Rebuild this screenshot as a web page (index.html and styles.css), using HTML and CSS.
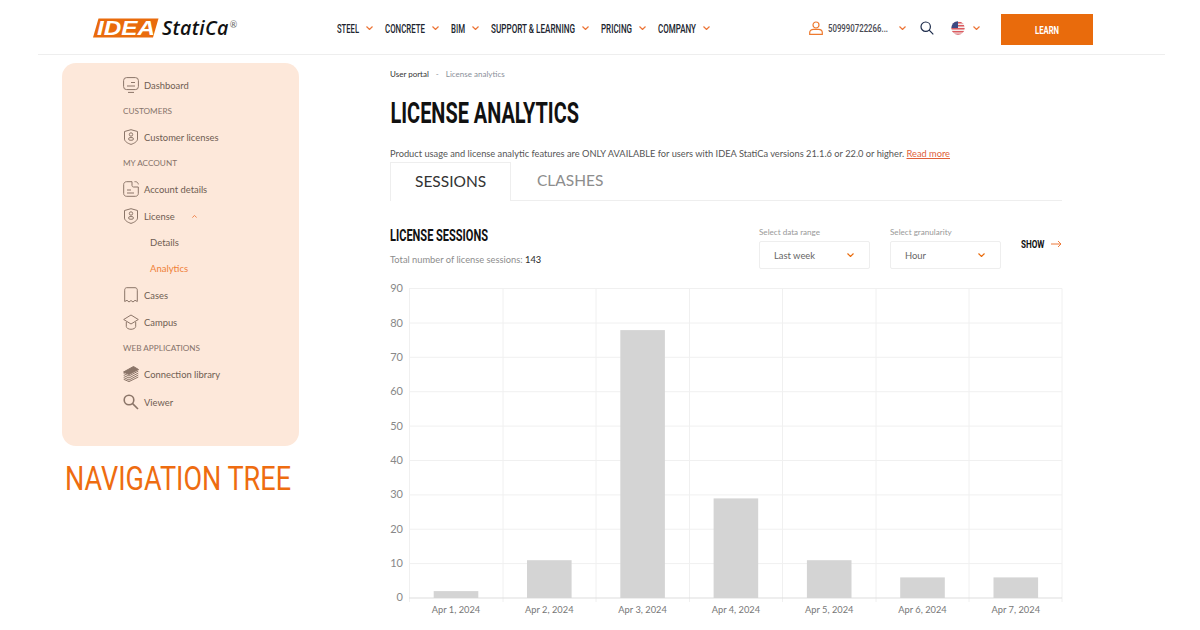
FILE: index.html
```html
<!DOCTYPE html>
<html lang="en">
<head>
<meta charset="utf-8">
<title>License analytics</title>
<link rel="stylesheet" href="styles.css">
</head>
<body>
<header class="topbar">
  <a class="logo">
    <svg class="logo-mark" viewBox="0 0 66 20" width="66" height="20">
      <path d="M5.5 0.5H65.5L60 19.5H0Z" fill="#e96b0c"/>
      <text x="4" y="17" class="logo-idea" textLength="58" lengthAdjust="spacingAndGlyphs">IDEA</text>
    </svg>
    <span class="logo-word">StatiCa</span><span class="logo-reg">®</span>
  </a>
  <nav class="menu">
    <a class="menu-item"><svg class="cond" width="22" height="14"><text y="11.6" textLength="22" lengthAdjust="spacingAndGlyphs">STEEL</text></svg><svg class="chev" viewBox="0 0 7 4"><path d="M.5.5 3.5 3.5 6.5.5"/></svg></a>
    <a class="menu-item"><svg class="cond" width="40" height="14"><text y="11.6" textLength="40" lengthAdjust="spacingAndGlyphs">CONCRETE</text></svg><svg class="chev" viewBox="0 0 7 4"><path d="M.5.5 3.5 3.5 6.5.5"/></svg></a>
    <a class="menu-item"><svg class="cond" width="14" height="14"><text y="11.6" textLength="14" lengthAdjust="spacingAndGlyphs">BIM</text></svg><svg class="chev" viewBox="0 0 7 4"><path d="M.5.5 3.5 3.5 6.5.5"/></svg></a>
    <a class="menu-item"><svg class="cond" width="84" height="14"><text y="11.6" textLength="84" lengthAdjust="spacingAndGlyphs">SUPPORT &amp; LEARNING</text></svg><svg class="chev" viewBox="0 0 7 4"><path d="M.5.5 3.5 3.5 6.5.5"/></svg></a>
    <a class="menu-item"><svg class="cond" width="31" height="14"><text y="11.6" textLength="31" lengthAdjust="spacingAndGlyphs">PRICING</text></svg><svg class="chev" viewBox="0 0 7 4"><path d="M.5.5 3.5 3.5 6.5.5"/></svg></a>
    <a class="menu-item"><svg class="cond" width="38" height="14"><text y="11.6" textLength="38" lengthAdjust="spacingAndGlyphs">COMPANY</text></svg><svg class="chev" viewBox="0 0 7 4"><path d="M.5.5 3.5 3.5 6.5.5"/></svg></a>
  </nav>
  <div class="tools">
    <svg class="user-ico" viewBox="0 0 14 14" width="14" height="14"><circle cx="7" cy="4" r="3"/><path d="M.7 13.3V11.5C.7 9.5 2.5 8.3 4.5 8.3H9.5C11.5 8.3 13.3 9.5 13.3 11.5V13.3Z"/></svg>
    <svg class="cond user-name" width="60" height="14"><text y="11.4" textLength="60" lengthAdjust="spacingAndGlyphs">509990722266...</text></svg>
    <svg class="chev chev-user" viewBox="0 0 7 4"><path d="M.5.5 3.5 3.5 6.5.5"/></svg>
    <svg class="search-ico" viewBox="0 0 14 14" width="14" height="14"><circle cx="5.7" cy="5.7" r="4.7"/><path d="M9.2 9.2 13.3 13.3"/></svg>
    <svg class="flag" viewBox="0 0 14 14" width="14" height="14">
      <defs><clipPath id="flagc"><circle cx="7" cy="7" r="6.7"/></clipPath></defs>
      <g clip-path="url(#flagc)">
        <rect width="14" height="14" fill="#f3eeee"/>
        <rect y="1" width="14" height="1.5" fill="#dc5a5f"/>
        <rect y="4" width="14" height="1.5" fill="#dc5a5f"/>
        <rect y="7" width="14" height="1.5" fill="#dc5a5f"/>
        <rect y="10" width="14" height="1.5" fill="#dc5a5f"/>
        <rect y="12.6" width="14" height="1.5" fill="#dc5a5f"/>
        <rect width="7" height="7" fill="#3d4a83"/>
      </g>
    </svg>
    <svg class="chev chev-flag" viewBox="0 0 7 4"><path d="M.5.5 3.5 3.5 6.5.5"/></svg>
    <a class="learn"><svg class="cond cond-white" width="24" height="14"><text y="11" textLength="24" lengthAdjust="spacingAndGlyphs">LEARN</text></svg></a>
  </div>
</header>

<main class="page">
  <div class="left">
    <aside class="tree">
      <a class="tree-row">
        <svg class="ico" viewBox="0 0 16 16"><rect x=".6" y=".6" width="14.8" height="12" rx="3"/><path d="M4 9H12M8 5.5H12M5 15.4H11"/></svg>Dashboard</a>
      <div class="tree-label">CUSTOMERS</div>
      <a class="tree-row">
        <svg class="ico" viewBox="0 0 16 16"><path d="M1.5 2.5 8 .7 14.5 2.5V10C14.5 12.5 11 14.5 8 15.4 5 14.5 1.5 12.5 1.5 10Z"/><circle cx="8" cy="5.5" r="1.7"/><rect x="5.6" y="8.6" width="4.8" height="2.6" rx="1.3"/></svg>Customer licenses</a>
      <div class="tree-label">MY ACCOUNT</div>
      <a class="tree-row">
        <svg class="ico" viewBox="0 0 16 16"><path d="M3.5.7H9V4.5C9 5.3 9.7 6 10.5 6H15.3V12.6C15.3 14.2 14 15.3 12.5 15.3H3.5C2 15.3.7 14.2.7 12.6V3.4C.7 1.9 2 .7 3.5.7ZM11.5.7H12.5C14 .7 15.3 1.9 15.3 3.4"/><path d="M4 9H8M4 12H11"/></svg>Account details</a>
      <a class="tree-row tree-tall">
        <svg class="ico" viewBox="0 0 16 16"><path d="M1.5 2.5 8 .7 14.5 2.5V10C14.5 12.5 11 14.5 8 15.4 5 14.5 1.5 12.5 1.5 10Z"/><circle cx="8" cy="5.5" r="1.7"/><rect x="5.6" y="8.6" width="4.8" height="2.6" rx="1.3"/></svg>License<svg class="chev chev-up" viewBox="0 0 7 4"><path d="M.5 3.5 3.5.5 6.5 3.5"/></svg></a>
      <a class="tree-sub">Details</a>
      <a class="tree-sub tree-active">Analytics</a>
      <a class="tree-row">
        <svg class="ico" viewBox="0 0 16 16"><path d="M3.5.7H12C13.6.7 14.3 1.8 14.3 3.2V14.5L12 13.3 10 15 8 13.5 6 15 4 13.3 1.7 14.5V3.2C1.7 1.8 2.4.7 3.5.7Z"/></svg>Cases</a>
      <a class="tree-row tree-tall">
        <svg class="ico" viewBox="0 0 16 16"><path d="M8 1 15.3 5.5 8 10 .7 5.5ZM3.3 8V12.5C3.3 14 5.5 15.3 8 15.3S12.7 14 12.7 12.5V8"/></svg>Campus</a>
      <div class="tree-label tree-short">WEB APPLICATIONS</div>
      <a class="tree-row tree-tall">
        <svg class="ico ico-stack" viewBox="0 0 16 16"><path class="solid" d="M.5 6 10.5.5 15.5 3.5 6 8.5Z"/><path d="M.7 7.5 6 10 15.3 5M.7 9.5 6 12 15.3 7M.7 11.5 6 14 15.3 9M.7 13.3 6 15.6 15.3 11"/></svg>Connection library</a>
      <a class="tree-row tree-tall">
        <svg class="ico ico-search" viewBox="0 0 16 16"><circle cx="6" cy="6" r="4.8"/><path d="M9.6 9.6 15 15"/></svg>Viewer</a>
    </aside>
    <div class="tree-caption"><svg class="cond cond-caption" width="227" height="36"><text y="30" textLength="226" lengthAdjust="spacingAndGlyphs">NAVIGATION TREE</text></svg></div>
  </div>

  <section class="content">
    <div class="crumbs"><span class="crumb-on">User portal</span><span class="crumb-sep">-</span><span>License analytics</span></div>
    <h1><svg class="cond cond-h1" width="190" height="36"><text x="0.5" y="28" textLength="188.5" lengthAdjust="spacingAndGlyphs">LICENSE ANALYTICS</text></svg></h1>
    <p class="notice">Product usage and license analytic features are ONLY AVAILABLE for users with IDEA StatiCa versions 21.1.6 or 22.0 or higher. <a class="more">Read more</a></p>
    <div class="tabs">
      <div class="tab tab-on">SESSIONS</div>
      <div class="tab">CLASHES</div>
    </div>
    <div class="panel-head">
      <div class="panel-title">
        <h2><svg class="cond cond-h2" width="99" height="20"><text y="16" textLength="98" lengthAdjust="spacingAndGlyphs">LICENSE SESSIONS</text></svg></h2>
        <p class="total">Total number of license sessions: <b>143</b></p>
      </div>
      <div class="filters">
        <div class="field">
          <div class="field-label">Select data range</div>
          <div class="select">Last week<svg class="chev chev-sel" viewBox="0 0 7 4"><path d="M.5.5 3.5 3.5 6.5.5"/></svg></div>
        </div>
        <div class="field">
          <div class="field-label">Select granularity</div>
          <div class="select">Hour<svg class="chev chev-sel" viewBox="0 0 7 4"><path d="M.5.5 3.5 3.5 6.5.5"/></svg></div>
        </div>
        <a class="show"><svg class="cond cond-show" width="24" height="14"><text y="11" textLength="23.5" lengthAdjust="spacingAndGlyphs">SHOW</text></svg><svg class="arrow" viewBox="0 0 11 8" width="11" height="8"><path d="M0 4H10M7 1 10 4 7 7"/></svg></a>
      </div>
    </div>
    <svg class="chart" viewBox="390 280 680 350" width="680" height="350">
      <g class="grid">
        <path d="M409 288.5H1062M409 323H1062M409 357.3H1062M409 391.7H1062M409 426.1H1062M409 460.5H1062M409 494.9H1062M409 529.2H1062M409 563.6H1062"/>
        <path d="M409.5 288.5V602M503 288.5V602M596 288.5V602M689.5 288.5V602M782.5 288.5V602M876 288.5V602M969 288.5V602M1062 288.5V602"/>
      </g>
      <path class="axis" d="M409 598H1062"/>
      <g class="bars">
        <rect x="433.7" y="591.1" width="44.6" height="6.9"/>
        <rect x="527" y="560.2" width="44.6" height="37.8"/>
        <rect x="620.3" y="330.1" width="44.6" height="267.9"/>
        <rect x="713.6" y="498.4" width="44.6" height="99.6"/>
        <rect x="806.9" y="560.2" width="44.6" height="37.8"/>
        <rect x="900.2" y="577.4" width="44.6" height="20.6"/>
        <rect x="993.5" y="577.4" width="44.6" height="20.6"/>
      </g>
      <g class="y-labels">
        <text x="403" y="292">90</text><text x="403" y="326.5">80</text><text x="403" y="361">70</text>
        <text x="403" y="395">60</text><text x="403" y="429.5">50</text><text x="403" y="464">40</text>
        <text x="403" y="498">30</text><text x="403" y="532.5">20</text><text x="403" y="567">10</text>
        <text x="403" y="601">0</text>
      </g>
      <g class="x-labels">
        <text x="456" y="613">Apr 1, 2024</text><text x="549.3" y="613">Apr 2, 2024</text>
        <text x="642.6" y="613">Apr 3, 2024</text><text x="735.9" y="613">Apr 4, 2024</text>
        <text x="829.2" y="613">Apr 5, 2024</text><text x="922.5" y="613">Apr 6, 2024</text>
        <text x="1015.8" y="613">Apr 7, 2024</text>
      </g>
    </svg>
  </section>
</main>
</body>
</html>
```

FILE: styles.css
```css
* { box-sizing: border-box; }
html, body { margin: 0; padding: 0; }
body {
  width: 1200px;
  height: 630px;
  overflow: hidden;
  background: #fff;
  font-family: Lato, "Liberation Sans", sans-serif;
  color: #333;
}

/* condensed display text, squeezed to width inside an svg */
.cond { display: block; flex: none; overflow: visible; }
.cond text {
  font-family: Roboto, "Liberation Sans", sans-serif;
  font-size: 12px;
  font-weight: 500;
  fill: #20242e;
}
.cond-white text { font-size: 11px; font-weight: 700; fill: #fff; }
.cond-caption text { font-size: 33px; font-weight: 400; fill: #ee6c10; }
.cond-h1 text { font-size: 30px; font-weight: 700; fill: #111; }
.cond-h2 text { font-size: 16.5px; font-weight: 700; fill: #111; }
.cond-show text { font-size: 11px; font-weight: 700; fill: #111; }

/* top bar */
.topbar {
  margin: 0 35px 0 38px;
  height: 55px;
  padding: 2px 72px 0 55px;
  border-bottom: 1px solid #eeeeee;
  display: flex;
  align-items: center;
}
.logo { display: flex; align-items: center; width: 244px; flex: none; }
.logo-mark { flex: none; display: block; }
.logo-idea {
  font-family: "Liberation Sans", sans-serif;
  font-weight: 700;
  font-style: italic;
  font-size: 21px;
  fill: #fff;
}
.logo-word {
  margin-left: 3px;
  font-family: "Open Sans", sans-serif;
  font-style: italic;
  font-weight: 600;
  font-size: 19.6px;
  letter-spacing: .3px;
  color: #111;
  line-height: 20px;
}
.logo-reg { font-size: 9px; color: #666; margin: -8px 0 0 1px; }
.menu { display: flex; gap: 12px; flex: none; }
.menu-item { display: flex; align-items: center; gap: 7px; }
.chev { width: 7px; height: 4px; flex: none; display: block; }
.chev path { fill: none; stroke: #ec7436; stroke-width: 1.2; }
.tools { display: flex; align-items: center; flex: none; margin-left: 99px; }
.user-ico circle, .user-ico path { fill: none; stroke: #ee7a2e; stroke-width: 1.2; }
.user-name { margin-left: 5px; }
.user-name text { font-size: 11px; fill: #4a4a52; }
.chev-user { margin-left: 11px; }
.search-ico { margin-left: 14px; }
.search-ico circle, .search-ico path { fill: none; stroke: #1c2b4a; stroke-width: 1.2; }
.flag { margin-left: 17px; }
.chev-flag { margin-left: 8px; }
.learn {
  margin: 3px 0 0 21px;
  width: 92px;
  height: 31px;
  background: #e96b0c;
  display: flex;
  align-items: center;
  justify-content: center;
}

/* page */
.page { display: flex; }
.left { margin-left: 62px; width: 328px; flex: none; }
.tree {
  margin-top: 8px;
  width: 237px;
  height: 383px;
  padding: 9px 0 0 61px;
  background: #fde8da;
  border-radius: 14px;
  color: #6f5d52;
}
.tree-row {
  height: 26px;
  display: flex;
  align-items: center;
  font-size: 9.4px;
  white-space: nowrap;
}
.tree-tall { height: 28px; }
.ico { width: 16px; height: 16px; margin-right: 5px; flex: none; }
.ico path, .ico rect, .ico circle { fill: none; stroke: #8b7568; stroke-width: 1; }
.ico .solid { fill: #8b7568; }
.ico-search circle, .ico-search path { stroke-width: 1.6; }
.tree-label {
  height: 26px;
  line-height: 26px;
  font-size: 8.2px;
  color: #85736a;
  white-space: nowrap;
}
.tree-short { height: 24px; line-height: 24px; }
.tree-sub {
  display: block;
  height: 26px;
  line-height: 26px;
  padding-left: 27px;
  font-size: 9.5px;
}
.tree-active { color: #f08038; }
.chev-up { margin-left: 17px; width: 5px; height: 3px; }
.tree-caption { margin: 14px 0 0 3px; height: 36px; }

/* content */
.content { width: 680px; flex: none; }
.crumbs {
  margin-top: 12px;
  height: 14px;
  display: flex;
  align-items: center;
  font-size: 8px;
  color: #8a8f99;
}
.crumb-on { color: #333; }
.crumb-sep { margin: 0 7px; }
h1 { margin: 14px 0 0; height: 36px; }
.notice {
  margin: 15px 0 0;
  font-size: 9.28px;
  line-height: 16px;
  color: #555;
  white-space: nowrap;
}
.more { color: #e0603a; text-decoration: underline; }
.tabs {
  margin: 0 8px 0 0;
  height: 39px;
  display: flex;
  border-bottom: 1px solid #eeeeee;
}
.tab {
  padding: 0 26px;
  height: 39px;
  line-height: 37px;
  font-size: 15.5px;
  color: #8d8d8d;
}
.tab-on {
  padding: 0 24px;
  width: 121px;
  color: #333;
  background: #fff;
  border: 1px solid #eeeeee;
  border-bottom: 0;
}
.panel-head {
  margin: 24px 8px 0 0;
  height: 44px;
  display: flex;
  justify-content: space-between;
}
h2 { margin: 0; height: 20px; }
.total {
  margin: 8px 0 0;
  font-size: 9.3px;
  line-height: 14px;
  color: #8d8d8d;
}
.total b { font-weight: 500; color: #333; }
.filters { display: flex; align-items: flex-start; }
.field { width: 111px; margin-right: 20px; margin-top: 1px; }
.field-label { font-size: 8.1px; line-height: 12px; color: #999; }
.select {
  margin-top: 3px;
  height: 28px;
  padding: 0 15px 0 14px;
  border: 1px solid #eeeeee;
  border-radius: 2px;
  display: flex;
  align-items: center;
  justify-content: space-between;
  font-size: 9.4px;
  color: #666;
}
.chev-sel path { stroke: #e96b0c; stroke-width: 1.2; }
.show {
  display: flex;
  align-items: center;
  gap: 6px;
  margin-top: 12px;
}
.arrow path { fill: none; stroke: #ee7a3a; stroke-width: 1; }
.chart { display: block; margin-top: 11px; }
.grid path { fill: none; stroke: #f0f0f0; stroke-width: 1; }
.axis { fill: none; stroke: #dddddd; stroke-width: 1; }
.bars rect { fill: #d4d4d4; }
.y-labels text { font-size: 11px; fill: #888; text-anchor: end; }
.x-labels text { font-size: 9.3px; fill: #777; text-anchor: middle; }
```
